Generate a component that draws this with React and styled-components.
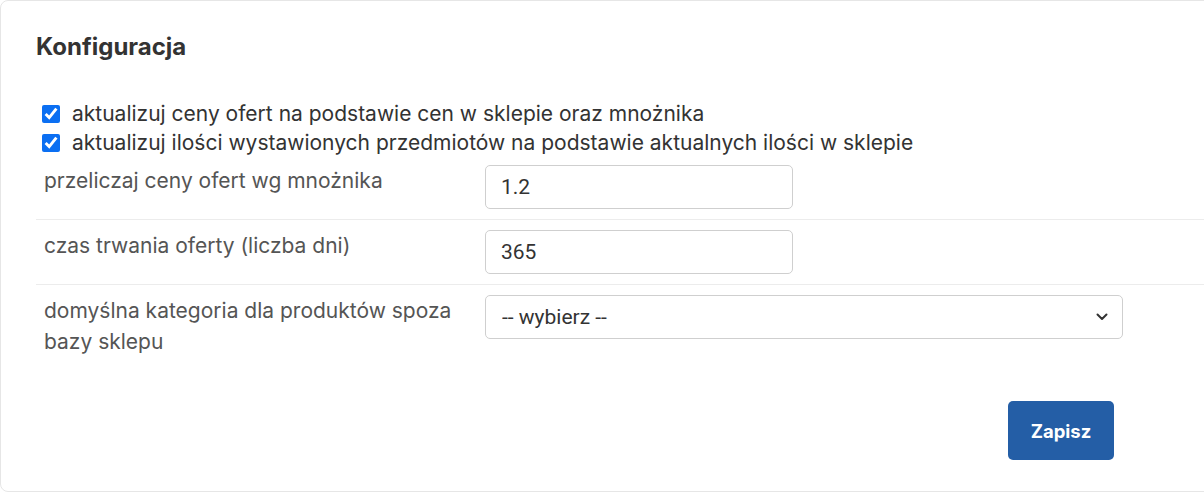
import React from 'react';
import styled, { createGlobalStyle } from 'styled-components';

const GlobalStyle = createGlobalStyle`
  html, body {
    margin: 0;
    padding: 0;
    background: #fff;
    overflow: hidden;
  }
  body {
    font-family: Inter, "Noto Sans", sans-serif;
    color: #333;
  }
`;

const Card = styled.div`
  box-sizing: border-box;
  width: 1230px;
  height: 492px;
  border: 1px solid #e6e6e6;
  border-radius: 8px;
  padding: 30px 0 0 35px;
  background: #fff;
`;

const Title = styled.h2`
  margin: 0 0 36px;
  font-size: 24px;
  font-weight: 700;
  line-height: 32px;
  color: #333;
`;

const CheckRow = styled.label`
  display: flex;
  align-items: center;
  gap: 12px;
  height: 29px;
  padding-left: 6px;
  font-size: 21px;
  color: #333;
`;

const Check = styled.input`
  margin: 0;
  width: 18px;
  height: 18px;
  accent-color: #0b6ff2;
`;

const Rows = styled.div`
  margin-top: -2px;
`;

const Row = styled.div`
  display: grid;
  grid-template-columns: 449px 1fr;
  padding: 10px 0;
  border-top: ${(p) => (p.$first ? 'none' : '1px solid #ececec')};
`;

const Label = styled.div`
  padding: 0 8px;
  font-size: 21px;
  line-height: 31px;
  color: #555;
`;

const TextInput = styled.input`
  box-sizing: border-box;
  width: 308px;
  height: 44px;
  border: 1px solid #cfcfcf;
  border-radius: 5px;
  padding: 0 15px;
  font-family: Roboto, "Liberation Sans", sans-serif;
  font-size: 21px;
  color: #333;
  outline: none;
`;

const SelectWrap = styled.div`
  position: relative;
  width: 638px;
`;

const Select = styled.select`
  box-sizing: border-box;
  width: 100%;
  height: 44px;
  border: 1px solid #cfcfcf;
  border-radius: 5px;
  padding: 0 16px;
  appearance: none;
  background: #fff;
  font-family: Roboto, "Liberation Sans", sans-serif;
  font-size: 21px;
  color: #333;
  outline: none;
`;

const Chevron = styled.svg`
  position: absolute;
  right: 15px;
  top: 18px;
  pointer-events: none;
`;

const Footer = styled.div`
  display: flex;
  justify-content: flex-end;
  padding: 34px 115px 0 0;
`;

const SaveButton = styled.button`
  width: 106px;
  height: 59px;
  border: none;
  border-radius: 5px;
  background: #245ea6;
  color: #fff;
  font-family: Inter, "Noto Sans", sans-serif;
  font-size: 18.5px;
  font-weight: 700;
  cursor: pointer;
`;

export default function App() {
  return (
    <>
      <GlobalStyle />
      <Card>
        <Title>Konfiguracja</Title>
        <CheckRow>
          <Check type="checkbox" defaultChecked />
          aktualizuj ceny ofert na podstawie cen w sklepie oraz mnożnika
        </CheckRow>
        <CheckRow>
          <Check type="checkbox" defaultChecked />
          aktualizuj ilości wystawionych przedmiotów na podstawie aktualnych ilości w sklepie
        </CheckRow>
        <Rows>
          <Row $first>
            <Label>przeliczaj ceny ofert wg mnożnika</Label>
            <TextInput defaultValue="1.2" />
          </Row>
          <Row>
            <Label>czas trwania oferty (liczba dni)</Label>
            <TextInput defaultValue="365" />
          </Row>
          <Row>
            <Label>domyślna kategoria dla produktów spoza bazy sklepu</Label>
            <SelectWrap>
              <Select defaultValue="">
                <option value="">-- wybierz --</option>
              </Select>
              <Chevron width="12" height="8" viewBox="0 0 12 8">
                <path d="M1.5 1.5 6 6l4.5-4.5" fill="none" stroke="#333" strokeWidth="2" strokeLinecap="round" strokeLinejoin="round" />
              </Chevron>
            </SelectWrap>
          </Row>
        </Rows>
        <Footer>
          <SaveButton>Zapisz</SaveButton>
        </Footer>
      </Card>
    </>
  );
}
